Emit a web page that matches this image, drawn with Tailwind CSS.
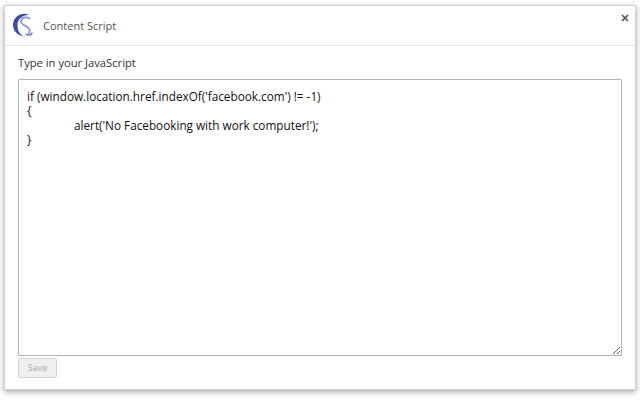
<!DOCTYPE html>
<html lang="en">
<head>
  <meta charset="UTF-8" />
  <title>Content Script</title>
  <script src="https://cdn.jsdelivr.net/npm/@tailwindcss/browser@4"></script>
</head>
<body class="bg-white h-[400px] w-[640px] overflow-hidden font-['Open_Sans',sans-serif]">
  <div class="pt-[5px] pl-[4px]">
    <div class="w-[632px] h-[385px] bg-white border border-[#d0d0d0] shadow-[0_2px_6px_rgba(0,0,0,0.35)] flex flex-col">
      <!-- header -->
      <div class="relative h-[40px] shrink-0 flex items-center pl-[8px] border-b border-[#e3e3e3]">
        <svg width="24" height="26" viewBox="0 0 24 26" fill="none">
          <path d="M16 1.500C8 -1 0 4 0 12c0 6 5 11 12 11.500C6 21.500 4.500 17 4.500 12 4.500 6 9 2.500 16 1.500Z" fill="#3a49ad"/>
          <path d="M16.500 5.500C13 3.500 8.500 4.500 8 8c-.5 3 3 4 5.500 5.500 3 1.800 4 4 2.500 6.500" stroke="#8d97d6" stroke-width="1.800" stroke-linecap="round"/>
          <path d="M13 21.500l4.500 .5 1.500-2" stroke="#6c78c8" stroke-width="1.500" stroke-linecap="round"/>
        </svg>
        <span class="ml-[6px] mt-[1px] text-[11px] text-[#555]">Content Script</span>
        <svg class="absolute right-[6px] top-[8px]" width="8" height="8" viewBox="0 0 8 8">
          <path d="M1 1l6 6M7 1l-6 6" stroke="#555" stroke-width="1.700"/>
        </svg>
      </div>
      <!-- body -->
      <div class="flex-1 px-[13px] flex flex-col">
        <label class="block mt-[8px] h-[25px] text-[11.200px] leading-[18px] text-[#333]">Type in your JavaScript</label>
        <textarea readonly class="block w-[604px] h-[277px] shrink-0 border border-[#b4b4b4] rounded-[1px] px-[8px] pt-[9px] text-[11.750px] leading-[14.300px] text-[#111] whitespace-pre resize [tab-size:47px] bg-white outline-none">if (window.location.href.indexOf('facebook.com') != -1)
{
	alert('No Facebooking with work computer!');
}</textarea>
        <button disabled class="mt-[2px] w-[39px] h-[20px] border border-[#d4d4d4] rounded-[2px] bg-[#efefef] text-[9px] text-[#aaa]">Save</button>
      </div>
    </div>
  </div>
</body>
</html>
